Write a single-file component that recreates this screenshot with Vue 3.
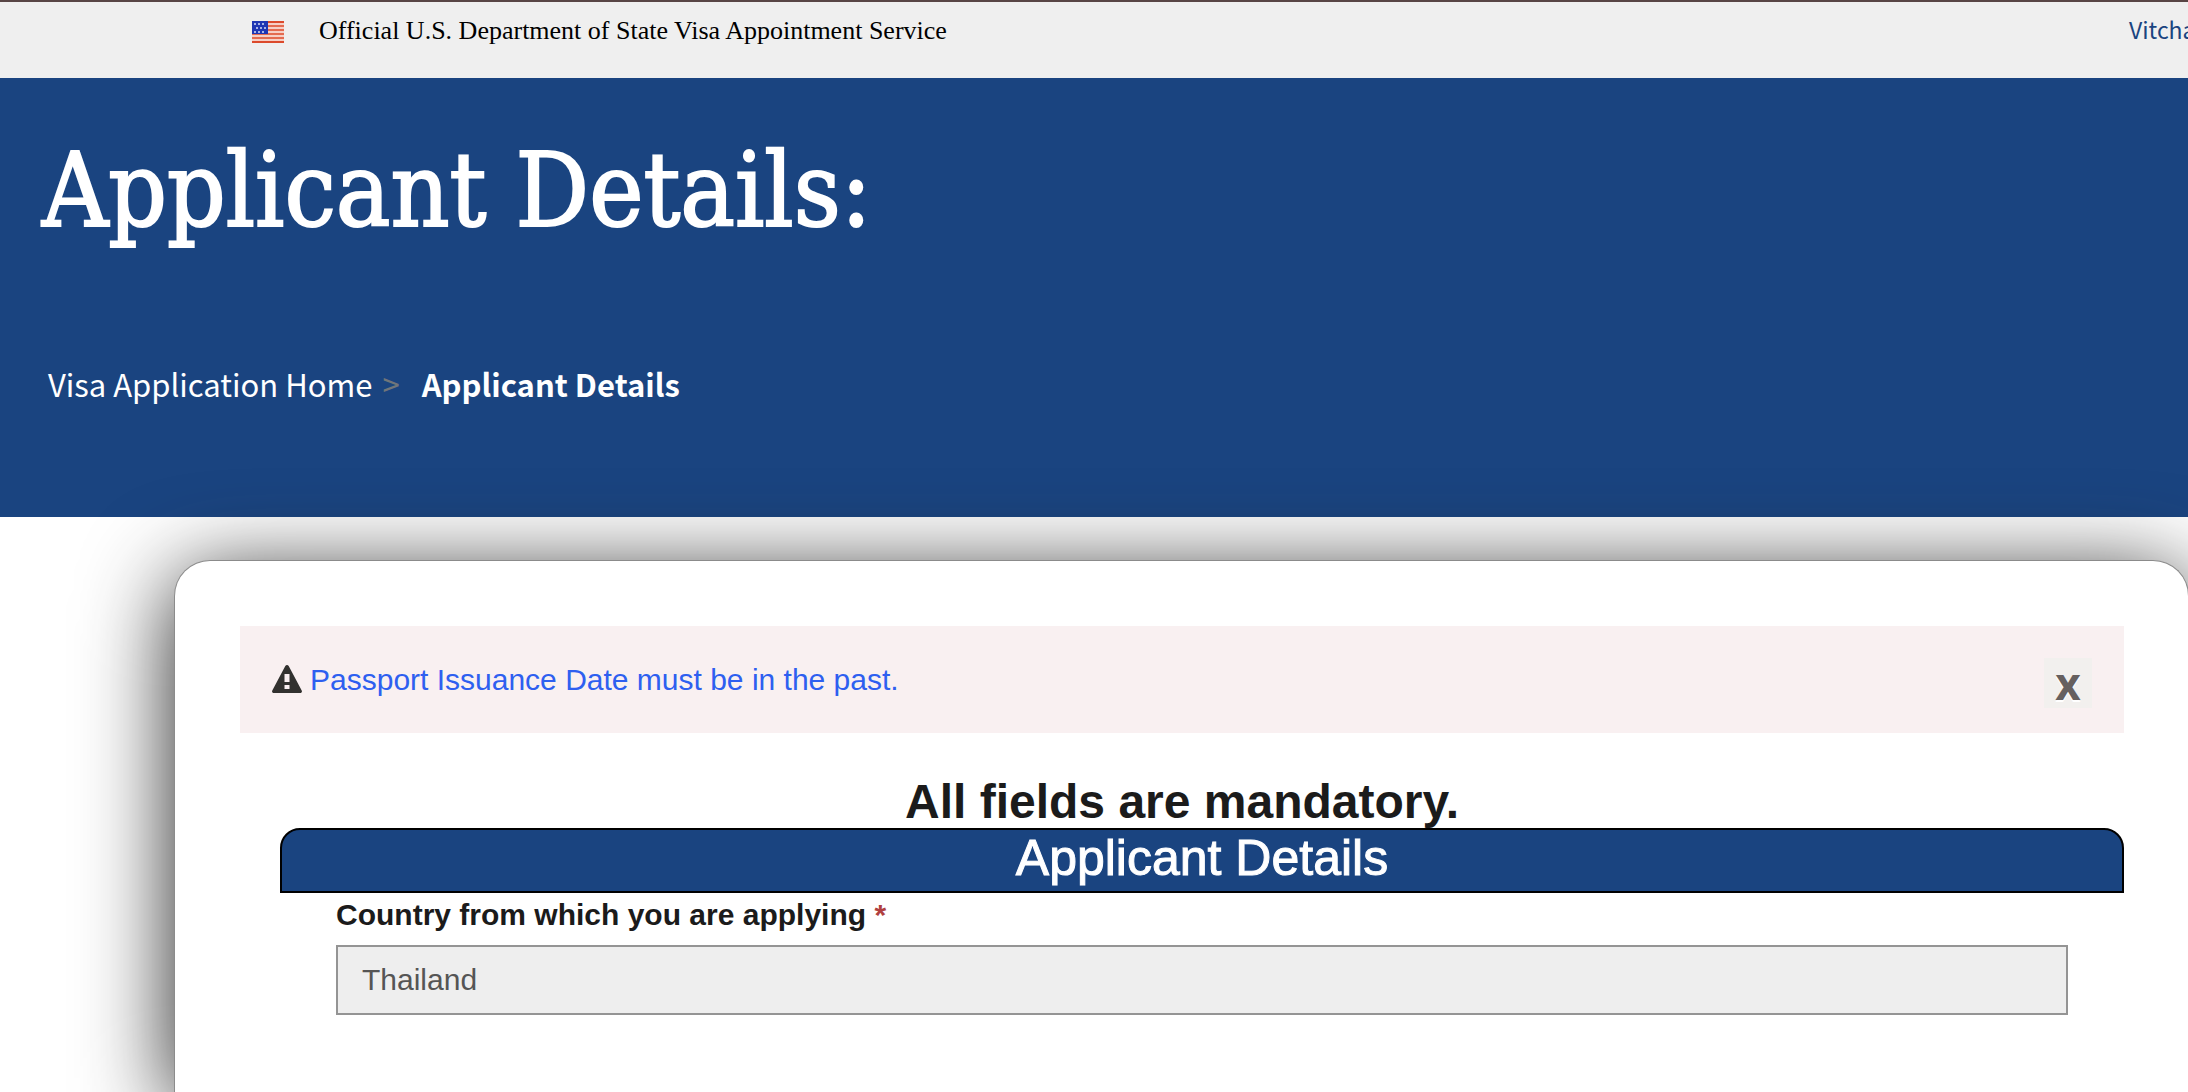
<script setup>
    import {ref} from 'vue'

    const country = ref('Thailand')
    const showAlert = ref(true)
</script>

<template>
    <div class="page">
        <header class="topbar">
            <svg class="flag" viewBox="0 0 32 22" aria-hidden="true">
                <rect width="32" height="22" fill="#f6cfc6"/>
                <rect width="32" height="2" fill="#dc4a2c"/>
                <rect y="4" width="32" height="2" fill="#e46b50"/>
                <rect y="8" width="32" height="2" fill="#e46b50"/>
                <rect y="12" width="32" height="2" fill="#e46b50"/>
                <rect y="16" width="32" height="2" fill="#e46b50"/>
                <rect y="20" width="32" height="2" fill="#dc4a2c"/>
                <rect width="16" height="13" fill="#1f36b4"/>
                <g fill="#a9b4e6">
                    <rect x="2" y="2" width="2" height="2"/>
                    <rect x="6" y="2" width="2" height="2"/>
                    <rect x="10" y="2" width="2" height="2"/>
                    <rect x="4" y="6" width="2" height="2"/>
                    <rect x="8" y="6" width="2" height="2"/>
                    <rect x="12" y="6" width="2" height="2"/>
                    <rect x="2" y="10" width="2" height="2"/>
                    <rect x="6" y="10" width="2" height="2"/>
                    <rect x="10" y="10" width="2" height="2"/>
                </g>
            </svg>
            <span class="official">Official U.S. Department of State Visa Appointment Service</span>
            <a class="user" href="#">Vitcha</a>
        </header>

        <div class="banner">
            <h1>Applicant Details:</h1>
            <nav class="crumbs">
                <a href="#">Visa Application Home</a>
                <span class="sep">&gt;</span>
                <b>Applicant Details</b>
            </nav>
        </div>

        <main class="panel">
            <div class="alert" v-if="showAlert" role="alert">
                <svg class="warn" viewBox="0 0 30 29" aria-hidden="true">
                    <path d="M15 0c.7 0 1.300.4 1.700 1L29.700 25.500c.7 1.300-.1 2.500-1.500 2.500H1.800c-1.400 0-2.200-1.200-1.500-2.500L13.300 1c.4-.6 1-1 1.700-1z" fill="#32312f"/>
                    <rect x="12.500" y="9" width="5" height="8" fill="#f9eff1"/>
                    <rect x="12.500" y="20" width="5" height="4" fill="#f9eff1"/>
                </svg>
                <a href="#country">Passport Issuance Date must be in the past.</a>
                <button class="close" type="button" @click="showAlert = false">x</button>
            </div>

            <h2>All fields are mandatory.</h2>

            <form>
                <h3>Applicant Details</h3>
                <div class="field">
                    <label for="country">Country from which you are applying <span class="star">*</span></label>
                    <input type="text" id="country" name="country" v-model="country" disabled>
                </div>
            </form>
        </main>
    </div>
</template>

<style>
    body {
        margin: 0;
        background-color: #fff;
    }
</style>

<style scoped>
    .page {
        display: flex;
        flex-direction: column;
        min-height: 100vh;
        box-sizing: border-box;
        overflow: hidden;
        font-family: 'Liberation Sans', Arial, sans-serif;
        font-size: 30px;
        color: #1b1b1b;
    }

    /* ------top bar-------*/
    .topbar {
        display: flex;
        align-items: flex-start;
        height: 60px;
        padding: 16px 0 0 252px;
        background-color: #efefef;
        border-top: 2px solid #584545;
    }
    .flag {
        width: 32px;
        height: 22px;
        margin-top: 3px;
    }
    .official {
        margin-left: 35px;
        font-family: 'Liberation Serif', 'Times New Roman', serif;
        font-size: 26px;
        line-height: 26px;
        color: #000;
    }
    .user {
        width: 59px;
        margin-left: auto;
        font-family: 'Noto Sans CJK JP', sans-serif;
        font-size: 23px;
        line-height: 22px;
        white-space: nowrap;
        color: #1a4480;
        text-decoration: none;
    }

    /* ------banner-------*/
    .banner {
        padding: 57px 42px 103px;
        background-color: #1a4480;
        color: #fff;
    }
    h1 {
        margin: 0 0 107px;
        font-family: 'DejaVu Serif Condensed', 'DejaVu Serif', serif;
        font-size: 102px;
        font-weight: normal;
        line-height: 112px;
        -webkit-text-stroke: 2px #fff;
    }
    .crumbs {
        display: flex;
        align-items: center;
        padding-left: 6px;
        font-family: 'Noto Sans CJK JP', sans-serif;
        font-size: 31px;
        line-height: 60px;
    }
    .crumbs a {
        color: #fff;
        text-decoration: none;
    }
    .crumbs .sep {
        margin: 0 22px 0 10px;
        color: #71767a;
    }

    /* ------form panel-------*/
    .panel {
        flex: 1;
        margin: 43px -1px 0 174px;
        padding: 65px 64px 70px 65px;
        background-color: #fff;
        border: 1px solid #8b8b8b;
        border-bottom: 0;
        border-radius: 36px 36px 0 0;
        box-shadow: 0 16px 90px #222;
    }
    .alert {
        display: flex;
        align-items: center;
        height: 107px;
        padding: 0 32px;
        background-color: #f9f0f1;
    }
    .warn {
        width: 30px;
        height: 29px;
        margin-right: 8px;
    }
    .alert a {
        color: #2e5ff0;
        text-decoration: none;
    }
    .close {
        align-self: flex-end;
        width: 48px;
        height: 50px;
        margin: 0 0 25px auto;
        padding: 0;
        border: 0;
        background-color: #f2f0ee;
        color: #66605f;
        font-family: 'Open Sans', sans-serif;
        font-size: 44px;
        font-weight: bold;
        line-height: 48px;
        text-shadow: 0 2px 0 #fff;
        cursor: pointer;
    }
    h2 {
        margin: 42px 0 0;
        font-size: 48px;
        line-height: 53px;
        text-align: center;
    }
    form {
        margin-left: 40px;
    }
    h3 {
        margin: 0;
        padding-bottom: 4px;
        background-color: #1a4480;
        border: 2px solid #000;
        border-radius: 20px 20px 0 0;
        color: #fff;
        font-size: 50px;
        font-weight: normal;
        line-height: 57px;
        text-align: center;
        -webkit-text-stroke: 1px #fff;
    }
    .field {
        display: flex;
        flex-direction: column;
        gap: 8px;
        padding: 0 56px;
    }
    label {
        font-weight: bold;
        line-height: 44px;
    }
    .star {
        color: #b04040;
    }
    input {
        height: 70px;
        box-sizing: border-box;
        padding: 0 24px;
        background-color: #eee;
        border: 2px solid #949494;
        border-radius: 0;
        color: #555;
        font: inherit;
    }
</style>
